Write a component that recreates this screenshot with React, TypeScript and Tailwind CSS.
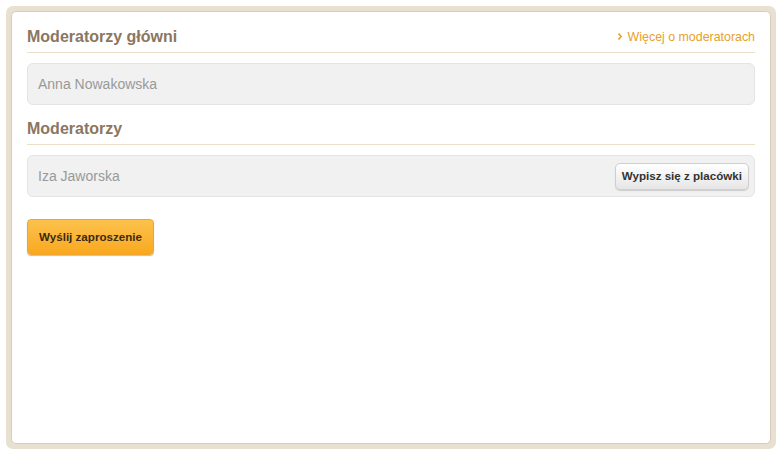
import React from "react";

export default function App() {
  const font = { fontFamily: '"Liberation Sans", Arial, sans-serif' };
  return (
    <div className="w-[782px] h-[455px] bg-white" style={font}>
      <div className="absolute left-[6px] top-[6px] w-[770px] h-[443px] rounded-[7px] bg-[#e8e0d1] p-[5px]">
        <div className="w-full h-full rounded-[5px] bg-white border border-[#d9cdb9] pt-[14px] px-[15px]">
          <div className="flex items-center justify-between border-b border-[#ebdfc8] pb-[5px] h-[21px] box-content">
            <h2 className="text-[16px] font-bold text-[#8b7660] leading-[20px]">Moderatorzy główni</h2>
            <a className="flex items-center gap-[6px] text-[12.4px] text-[#e9a02a] leading-[14px]">
              <svg width="4" height="7" viewBox="0 0 4 7"><path d="M0.5 0.5 L3.2 3.5 L0.5 6.5" stroke="#e9a02a" strokeWidth="1.6" fill="none" /></svg>
              Więcej o moderatorach
            </a>
          </div>
          <div className="mt-[10px] h-[42px] rounded-[6px] bg-[#f1f1f1] border border-[#e4e4e4] flex items-center pl-[10px] text-[14px] text-[#999999]">
            Anna Nowakowska
          </div>
          <div className="mt-[13px] border-b border-[#ebdfc8] pb-[5px] h-[21px] box-content">
            <h2 className="text-[16px] font-bold text-[#8b7660] leading-[21px]">Moderatorzy</h2>
          </div>
          <div className="mt-[10px] h-[42px] rounded-[6px] bg-[#f1f1f1] border border-[#e4e4e4] flex items-center justify-between pl-[10px] pr-[5px] text-[14px] text-[#999999]">
            <span>Iza Jaworska</span>
            <button className="h-[27px] px-[6px] rounded-[5px] border border-[#cfcfcf] bg-gradient-to-b from-white to-[#e6e6e6] text-[11.6px] font-bold text-[#333333] shadow-[0_1px_1px_rgba(0,0,0,0.15)]">
              Wypisz się z placówki
            </button>
          </div>
          <button className="mt-[22px] h-[36px] w-[127px] rounded-[4px] bg-gradient-to-b from-[#fcc24b] to-[#f9a81c] border border-[#f1a52b] text-[11.6px] font-bold text-[#3b2a12] shadow-[0_1px_1px_rgba(0,0,0,0.25)]">
            Wyślij zaproszenie
          </button>
        </div>
      </div>
    </div>
  );
}
